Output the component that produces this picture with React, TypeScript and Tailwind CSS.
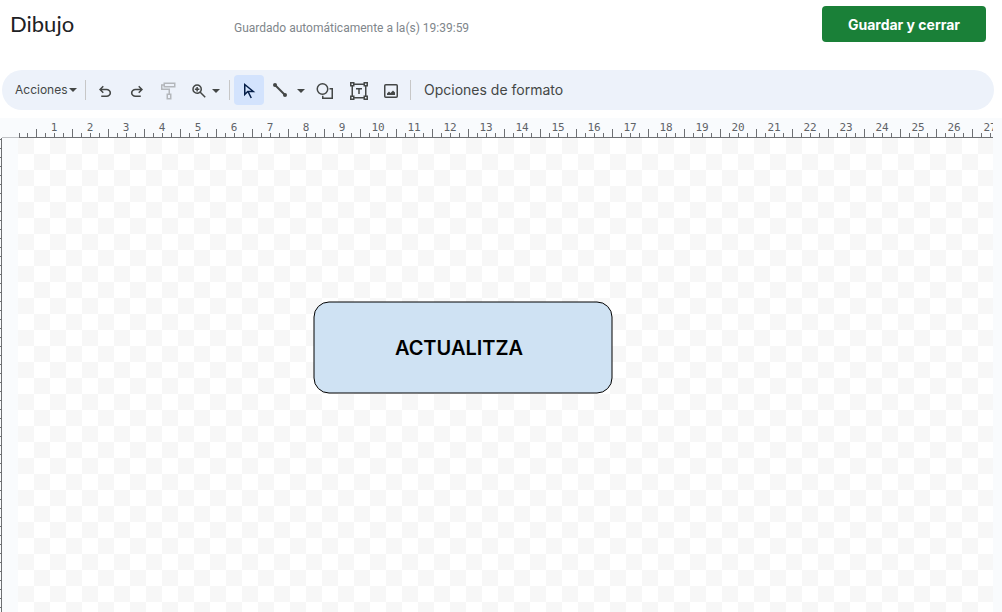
import type { ReactNode } from "react";

const UNITS = Array.from({ length: 27 }, (_, i) => i + 1);

function Caret() {
  return (
    <svg viewBox="0 0 8 4" className="h-1 w-2 shrink-0" fill="currentColor" aria-hidden="true">
      <path d="M0 0h8L4 4z" />
    </svg>
  );
}

function Symbol({ d }: { d: string }) {
  return (
    <svg viewBox="0 -960 960 960" className="size-[18px] shrink-0" fill="currentColor" aria-hidden="true">
      <path d={d} />
    </svg>
  );
}

function Drawing({ children }: { children: ReactNode }) {
  return (
    <svg
      viewBox="0 0 18 18"
      className="size-[18px] shrink-0"
      fill="none"
      stroke="currentColor"
      strokeWidth="1.5"
      aria-hidden="true"
    >
      {children}
    </svg>
  );
}

function Tool({ label, className, children }: { label: string; className: string; children: ReactNode }) {
  return (
    <button
      type="button"
      aria-label={label}
      title={label}
      className={`flex h-[30px] shrink-0 items-center rounded pt-0.5 ${className}`}
    >
      {children}
    </button>
  );
}

function Header() {
  return (
    <header className="flex items-start pt-1.5 pr-4 pl-2.5">
      <h1 className="w-56 shrink-0 font-['Lato',sans-serif] text-[22px] leading-9 text-[#202124]">Dibujo</h1>
      <p className="grow pt-1 font-['Roboto',sans-serif] text-xs leading-9 text-[#80868b]">
        Guardado automáticamente a la(s) 19:39:59
      </p>
      <button
        type="button"
        className="h-9 w-[164px] shrink-0 rounded bg-[#1a8038] font-['Inter',sans-serif] text-[14px] font-bold text-white"
      >
        Guardar y cerrar
      </button>
    </header>
  );
}

function Toolbar() {
  return (
    <div
      role="toolbar"
      aria-label="Herramientas"
      className="mt-6 mr-2 ml-0.5 flex h-10 items-center rounded-full bg-[#edf2fa] pl-[13px] font-['Inter',sans-serif] text-[#444746]"
    >
      <button type="button" className="flex h-[30px] w-[62px] shrink-0 items-center justify-between text-xs">
        Acciones
        <Caret />
      </button>
      <span className="mr-[3px] ml-2 h-5 w-px bg-[#c7c7c7]" />
      <Tool label="Deshacer" className="w-8 justify-center">
        <Symbol d="M280-160v-80h284q63 0 109.500-40T720-380q0-60-46.500-100T564-520H312l104 104-56 56-200-200 200-200 56 56-104 104h252q97 0 169 63t72 157q0 94-72 157t-169 63H280Z" />
      </Tool>
      <Tool label="Rehacer" className="w-8 justify-center">
        <Symbol d="M396-160q-97 0-169-63t-72-157q0-94 72-157t169-63h252L544-704l56-56 200 200-200 200-56-56 104-104H396q-63 0-109.500 40T240-380q0 60 46.500 100T396-240h284v80H396Z" />
      </Tool>
      <Tool label="Copiar formato" className="w-8 justify-center text-[#b4b7bb]">
        <Drawing>
          <path d="M4.250 1.250h10.500v3.500H4.250zM4 3H1.750v4.250h7.500V12M7.250 12.250h3.500v4.500h-3.500z" />
        </Drawing>
      </Tool>
      <Tool label="Zoom" className="w-10 justify-center gap-1">
        <Symbol d="M784-120 532-372q-30 24-69 38t-83 14q-109 0-184.500-75.500T120-580q0-109 75.500-184.500T380-840q109 0 184.500 75.500T640-580q0 44-14 83t-38 69l252 252-56 56ZM380-400q75 0 127.500-52.500T560-580q0-75-52.500-127.500T380-760q-75 0-127.500 52.500T200-580q0 75 52.500 127.500T380-400Zm-40-60v-80h-80v-80h80v-80h80v80h80v80h-80v80h-80Z" />
        <Caret />
      </Tool>
      <span className="mx-1 h-5 w-px bg-[#c7c7c7]" />
      <Tool label="Seleccionar" className="w-[30px] justify-center bg-[#d3e3fd] text-[#041e49]">
        <Drawing>
          <path d="M4.750 2.500v10l3-3h5.500zM8 9.500l3.250 6.500" />
        </Drawing>
      </Tool>
      <Tool label="Línea" className="w-11 gap-2 pl-[7px]">
        <Drawing>
          <path d="M4 3l10 10" strokeWidth="2" />
          <circle cx="4" cy="3" r="2" fill="currentColor" stroke="none" />
          <circle cx="14" cy="13" r="2" fill="currentColor" stroke="none" />
        </Drawing>
        <Caret />
      </Tool>
      <Tool label="Forma" className="w-[34px] justify-center">
        <Drawing>
          <circle cx="6.500" cy="7" r="5.250" />
          <path d="M13.500 6.750h2.750v9.500H6.750v-2.500" />
        </Drawing>
      </Tool>
      <Tool label="Cuadro de texto" className="w-[34px] justify-center">
        <Drawing>
          <path d="M.75.75h3v3h-3zM14.250.75h3v3h-3zM.75 14.250h3v3h-3zM14.250 14.250h3v3h-3zM4 2.250h10M4 15.750h10M2.250 4v10M15.750 4v10M6 6.750h6M9 6.750V12" />
        </Drawing>
      </Tool>
      <Tool label="Imagen" className="w-[30px] justify-center">
        <Drawing>
          <rect x="2.750" y="2.750" width="12.500" height="12.500" rx="1" />
          <path d="M5 13v-1.500l2-2 1.500 1.500 2.500-2.500 2 2V13z" fill="currentColor" stroke="none" />
        </Drawing>
      </Tool>
      <span className="mx-1 h-5 w-px bg-[#c7c7c7]" />
      <button type="button" className="h-[30px] shrink-0 pl-[9px] text-sm">
        Opciones de formato
      </button>
    </div>
  );
}

function HorizontalRuler() {
  return (
    <div className="mt-2 flex h-5 shrink-0 bg-[#f9fbfd] pr-[9px] pl-0.5">
      <span className="w-[17px] shrink-0 border-b border-[#c0c2c5]" />
      <div className="flex h-5 grow overflow-hidden border-b border-[#6e7073]">
        <div className="flex shrink-0 items-end">
          <span className="h-1 w-2 border-l border-[#6e7073]" />
          <span className="h-1 w-[9px] border-l border-[#6e7073]" />
        </div>
        {UNITS.map((n) => (
          <div key={n} className="flex w-9 shrink-0 flex-col">
            <span className="h-[11px] pt-0.5 text-center font-['DejaVu_Sans_Mono',monospace] text-[11px] leading-4 text-[#5f6368]">
              {n}
            </span>
            <div className="flex h-2 items-end">
              <span className="h-2 w-[9px] border-l border-[#6e7073]" />
              <span className="h-1 w-[9px] border-l border-[#6e7073]" />
              <span className="h-1 w-[9px] border-l border-[#6e7073]" />
              <span className="h-1 w-[9px] border-l border-[#6e7073]" />
            </div>
          </div>
        ))}
      </div>
    </div>
  );
}

function Canvas() {
  return (
    <main className="flex grow bg-[#f9fbfd] pr-[9px]">
      <div className="w-px bg-[repeating-linear-gradient(#f9fbfd_0_1px,#6e7073_1px_2px,#f9fbfd_2px_9px)]" />
      <div className="mr-4 w-px bg-[#6e7073]" />
      <div className="relative grow overflow-hidden bg-[conic-gradient(#fff_25%,#f7f7f7_0_50%,#fff_0_75%,#f7f7f7_0)] bg-size-[32px_32px]">
        <div className="absolute top-[163px] left-[295px] grid h-[93px] w-[300px] place-items-center">
          <svg viewBox="0 0 300 93" className="col-start-1 row-start-1 h-[93px] w-[300px]" aria-hidden="true">
            <rect x="1" y="1" width="298" height="91" rx="15" fill="#cfe2f3" stroke="#000" />
          </svg>
          <span className="col-start-1 row-start-1 pr-2 font-['Inter',sans-serif] text-xl font-semibold text-black">
            ACTUALITZA
          </span>
        </div>
      </div>
    </main>
  );
}

export default function App() {
  return (
    <div className="flex min-h-screen flex-col overflow-hidden bg-white">
      <Header />
      <Toolbar />
      <HorizontalRuler />
      <Canvas />
    </div>
  );
}
